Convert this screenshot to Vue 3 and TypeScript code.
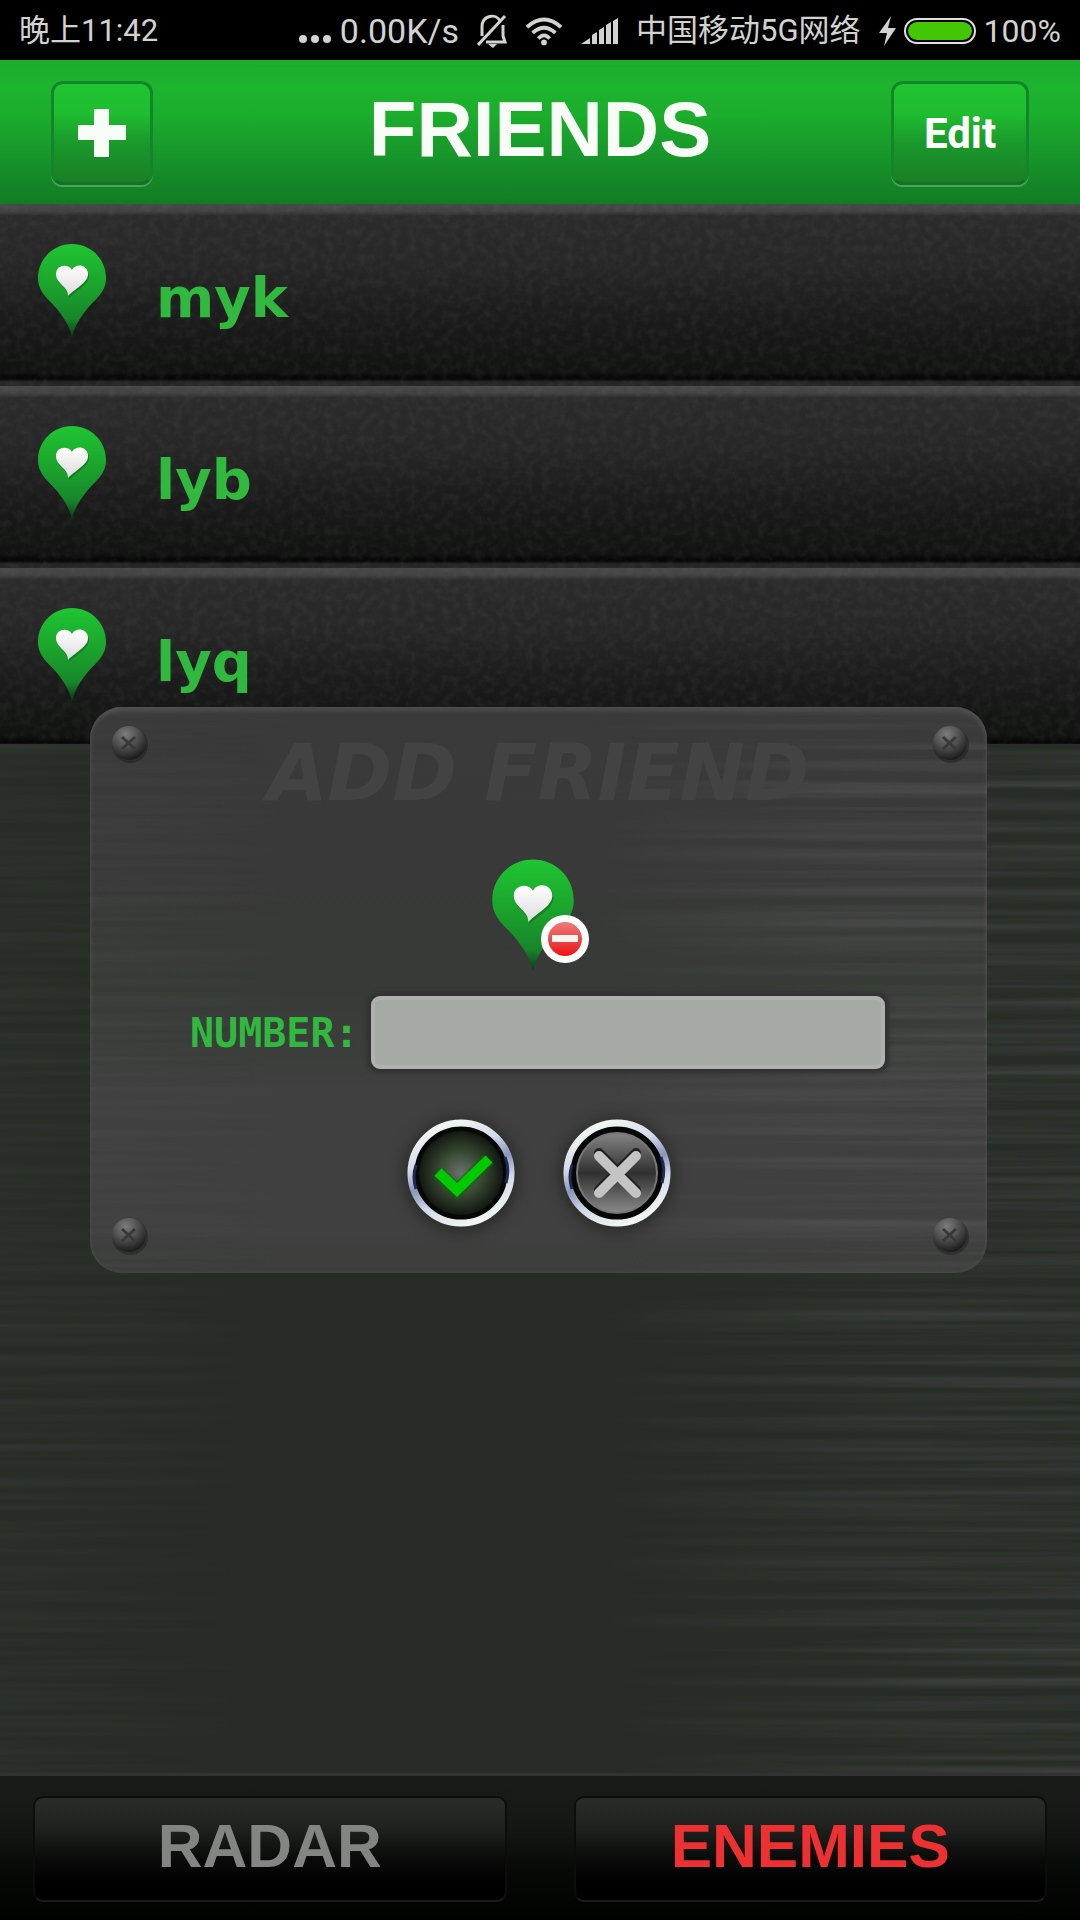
<script setup lang="ts">
import { ref } from 'vue'

interface Friend {
  id: number
  name: string
}

const friends = ref<Friend[]>([
  { id: 1, name: 'myk' },
  { id: 2, name: 'lyb' },
  { id: 3, name: 'lyq' },
])
const phone = ref('')
const screws = ['tl', 'tr', 'bl', 'br']
</script>

<template>
  <div class="screen">
    <svg class="defs" width="0" height="0" aria-hidden="true">
      <defs>
        <linearGradient id="pinFill" x1="0" y1="0" x2="0" y2="1">
          <stop offset="0" stop-color="#1fc532" />
          <stop offset="0.45" stop-color="#1ba32c" />
          <stop offset="0.8" stop-color="#17862a" />
          <stop offset="1" stop-color="#0d3a14" />
        </linearGradient>
        <linearGradient id="heartFill" x1="0" y1="0" x2="0" y2="1">
          <stop offset="0" stop-color="#ffffff" />
          <stop offset="1" stop-color="#dcdcdc" />
        </linearGradient>
        <linearGradient id="ring" x1="0.3" y1="0" x2="0.7" y2="1">
          <stop offset="0" stop-color="#f4f8f4" />
          <stop offset="0.3" stop-color="#d4dae8" />
          <stop offset="0.5" stop-color="#8a96bc" />
          <stop offset="0.7" stop-color="#d4dae8" />
          <stop offset="1" stop-color="#f4f8f4" />
        </linearGradient>
        <radialGradient id="screwFill" cx="0.4" cy="0.25" r="0.8">
          <stop offset="0" stop-color="#7c7c7c" />
          <stop offset="0.5" stop-color="#4c4c4c" />
          <stop offset="1" stop-color="#151515" />
        </radialGradient>
        <radialGradient id="okFill" cx="0.5" cy="0.5" r="0.5">
          <stop offset="0" stop-color="#6a726a" />
          <stop offset="0.55" stop-color="#35452f" />
          <stop offset="1" stop-color="#121812" />
        </radialGradient>
        <linearGradient id="noFill" x1="0" y1="0" x2="0" y2="1">
          <stop offset="0" stop-color="#858585" />
          <stop offset="0.5" stop-color="#303030" />
          <stop offset="1" stop-color="#8a8a8a" />
        </linearGradient>
        <linearGradient id="stopFill" x1="0" y1="0" x2="0" y2="1">
          <stop offset="0" stop-color="#f07a7a" />
          <stop offset="0.5" stop-color="#e84a4a" />
          <stop offset="1" stop-color="#ee1414" />
        </linearGradient>
        <filter id="brushed" x="0" y="0" width="100%" height="100%">
          <feTurbulence type="fractalNoise" baseFrequency="0.001 0.09" numOctaves="3" seed="4" />
          <feColorMatrix values="0 0 0 0 0.3  0 0 0 0 0.3  0 0 0 0 0.31  2.4 0 0 0 -0.9" />
        </filter>
        <filter id="grain" x="0" y="0" width="100%" height="100%">
          <feTurbulence type="fractalNoise" baseFrequency="0.12" numOctaves="3" seed="8" />
          <feColorMatrix values="0 0 0 0 0.4  0 0 0 0 0.42  0 0 0 0 0.4  1.6 0 0 0 -0.6" />
        </filter>
        <symbol id="pin" viewBox="0 0 70 96">
          <path
            d="M35 1C54 1 69 16 69 35C69 50 58 56 50 66C43 75 38 82 35 94C32 82 27 75 20 66C12 56 1 50 1 35C1 16 16 1 35 1Z"
            fill="url(#pinFill)"
          />
          <path
            d="M36 29C39 22 51 23 52 32C53 41 41 46 32 55C33 46 20 43 20 33C20 24 32 22 36 29Z"
            fill="#0b6a1a"
            opacity="0.6"
          />
          <path
            d="M35 27C38 20 50 21 51 30C52 39 40 44 31 53C32 44 19 41 19 31C19 22 31 20 35 27Z"
            fill="url(#heartFill)"
          />
        </symbol>
      </defs>
    </svg>

    <div class="status">
      <span>晚上11:42</span>
      <div class="status-right">
        <span class="pair">
          <svg width="34" height="32" viewBox="0 0 34 32" fill="currentColor">
            <circle cx="5" cy="24" r="4" /><circle cx="17" cy="24" r="4" /><circle cx="29" cy="24" r="4" />
          </svg>
          <span class="rate">0.00K/s</span>
        </span>
        <svg width="30" height="34" viewBox="0 0 30 34" fill="none" stroke="currentColor" stroke-width="3">
          <path d="M5 22V13C5 1 19 -1 23 7M26 11V22L28 28H9M1 31L28 2" />
          <path d="M11 30H20L16 34Z" fill="currentColor" stroke="none" />
        </svg>
        <svg width="38" height="30" viewBox="0 0 40 30" fill="none" stroke="currentColor" stroke-width="4">
          <path d="M2 11Q20 -5 38 11M8 17Q20 6 32 17M14 23Q20 16 26 23" />
          <circle cx="20" cy="27" r="3" fill="currentColor" stroke="none" />
        </svg>
        <svg width="37" height="28" viewBox="0 0 37 28" fill="currentColor">
          <path d="M0 27L9 21V27ZM11 18L16 15V27H11ZM18 13L23 10V27H18ZM25 8L30 5V27H25ZM32 4L37 1V27H32Z" />
        </svg>
        <span>中国移动5G网络</span>
        <span class="pair">
          <svg width="17" height="30" viewBox="0 0 17 30" fill="currentColor">
            <path d="M12 0L0 17H8L5 30L17 12H9Z" />
          </svg>
          <span class="battery"></span>
          <span class="percent">100%</span>
        </span>
      </div>
    </div>

    <header class="bar">
      <button class="bar-btn add" type="button" aria-label="Add friend">
        <svg width="48" height="48" viewBox="0 0 48 48" fill="#f8fcf6">
          <path d="M16 0H31V16H48V31H31V48H16V31H0V16H16Z" />
        </svg>
      </button>
      <h1>FRIENDS</h1>
      <button class="bar-btn edit" type="button">Edit</button>
    </header>

    <ul class="list">
      <li v-for="f in friends" :key="f.id" class="row">
        <svg class="fill grain" aria-hidden="true"><rect width="100%" height="100%" filter="url(#grain)" /></svg>
        <svg class="row-pin" width="70" height="96"><use href="#pin" /></svg>
        <span class="name">{{ f.name }}</span>
      </li>
    </ul>

    <main class="metal">
      <svg class="fill streaks" aria-hidden="true"><rect width="100%" height="100%" filter="url(#brushed)" /></svg>
    </main>

    <nav class="tabs">
      <button class="tab radar" type="button">RADAR</button>
      <button class="tab enemies" type="button">ENEMIES</button>
    </nav>

    <div class="overlay">
      <form class="dialog" @submit.prevent>
        <svg class="fill streaks" aria-hidden="true"><rect width="100%" height="100%" filter="url(#brushed)" /></svg>
        <svg v-for="s in screws" :key="s" class="screw" :class="s" width="40" height="40" viewBox="0 0 40 40">
          <circle cx="21" cy="22" r="18" fill="#1c1f1c" opacity="0.5" />
          <circle cx="20" cy="20" r="17" fill="url(#screwFill)" />
          <path d="M13 14L26 26M26 14L13 26" stroke="#383838" stroke-width="3" />
        </svg>
        <h2>ADD FRIEND</h2>
        <svg class="hero" width="112" height="124" viewBox="0 0 112 124">
          <use href="#pin" x="8" y="1" width="84" height="120" />
          <circle cx="82" cy="84" r="24" fill="#ffffff" />
          <circle cx="82" cy="84" r="17" fill="url(#stopFill)" />
          <rect x="69" y="80" width="26" height="7" fill="#fff4f0" />
        </svg>
        <div class="field">
          <label for="number">NUMBER:</label>
          <input id="number" v-model="phone" type="text" />
        </div>
        <div class="actions">
          <button class="round" type="submit" aria-label="Confirm">
            <svg width="108" height="108" viewBox="0 0 108 108">
              <circle cx="54" cy="54" r="50" fill="#050805" />
              <circle cx="54" cy="54" r="50" fill="none" stroke="url(#ring)" stroke-width="7" />
              <path d="M98 38Q103 50 99 64M9 70Q5 58 9 46" fill="none" stroke="#1e2a52" stroke-width="3" />
              <circle cx="54" cy="54" r="42" fill="url(#okFill)" />
              <path d="M31 54L50 72L82 40" fill="none" stroke="#0a6a08" stroke-width="14" opacity="0.5" />
              <path d="M31 53L50 71L82 40" fill="none" stroke="#00cb00" stroke-width="10" />
            </svg>
          </button>
          <button class="round" type="button" aria-label="Cancel">
            <svg width="108" height="108" viewBox="0 0 108 108">
              <circle cx="54" cy="54" r="50" fill="#050805" />
              <circle cx="54" cy="54" r="50" fill="none" stroke="url(#ring)" stroke-width="7" />
              <path d="M98 38Q103 50 99 64M9 70Q5 58 9 46" fill="none" stroke="#1e2a52" stroke-width="3" />
              <circle cx="54" cy="54" r="40" fill="url(#noFill)" stroke="#777777" stroke-width="2" />
              <path d="M36 34L73 71M73 34L36 71" stroke="#222222" stroke-width="10" stroke-linecap="round" />
              <path d="M36 37L73 74M73 37L36 74" stroke="#c4c4c4" stroke-width="10" stroke-linecap="round" />
            </svg>
          </button>
        </div>
      </form>
    </div>
  </div>
</template>

<style>
body {
  background: #282c27;
}
</style>

<style scoped>
* {
  box-sizing: border-box;
}
.screen {
  position: relative;
  display: flex;
  flex-direction: column;
  min-height: 100vh;
  background: #282c27;
  font-family: 'Liberation Sans', sans-serif;
}
.defs {
  position: absolute;
}
button {
  border: 0;
  padding: 0;
  margin: 0;
  background: none;
}
.fill {
  position: absolute;
  inset: 0;
  width: 100%;
  height: 100%;
}
.status {
  display: flex;
  justify-content: space-between;
  align-items: center;
  height: 60px;
  padding: 2px 19px 0;
  background: #000;
  color: #d2d2d0;
  font-family: Roboto, 'Noto Sans CJK SC', sans-serif;
  font-size: 31px;
  line-height: 40px;
  white-space: nowrap;
}
.status-right {
  display: flex;
  align-items: center;
  gap: 18px;
}
.pair {
  display: flex;
  align-items: center;
  gap: 8px;
}
.rate {
  font-size: 34px;
}
.percent {
  font-size: 32px;
}
.battery {
  width: 72px;
  height: 26px;
  border: 2px solid #e0e0e0;
  border-radius: 13px;
  padding: 2px;
  background: #43c705 content-box;
}
.bar {
  display: grid;
  grid-template-columns: 1fr auto 1fr;
  align-items: center;
  height: 144px;
  padding: 2px 51px 0;
  background: linear-gradient(#1cac2e, #1db42e 20%, #1bac2c 40%, #17922a 70%, #127c25);
}
.bar-btn {
  height: 104px;
  border: 3px solid #13852a;
  border-bottom-color: #107328;
  border-radius: 12px;
  background: linear-gradient(#1fc531, #1fbd30 30%, #1a992b 60%, #197f25);
  box-shadow: 0 2px 0 #4da55a;
  color: #fff;
}
.add {
  display: flex;
  align-items: center;
  justify-content: center;
  width: 102px;
}
.edit {
  justify-self: end;
  width: 138px;
  padding-top: 2px;
  font-family: Roboto, sans-serif;
  font-size: 42px;
  font-weight: 700;
  line-height: 50px;
}
h1 {
  margin: 0;
  padding-bottom: 8px;
  color: #f8fcf6;
  font-size: 78px;
  line-height: 80px;
}
.list {
  margin: 0;
  padding: 0;
  list-style: none;
  background: #1b1d1b;
}
.row {
  position: relative;
  display: flex;
  align-items: flex-start;
  height: 182px;
  padding-left: 37px;
  background: linear-gradient(#484848, #424242 7px, #2b2b2b 12px, #262726 60px, #1b1c1b 110px, #111311 168px, #060706 173px, #060706 175px, #232523 178px, #272927);
}
.row:last-child {
  height: 176px;
}
.grain {
  opacity: 0.09;
}
.row-pin {
  position: relative;
  margin-top: 39px;
}
.name {
  position: relative;
  margin: 64px 0 0 49px;
  color: #30b83f;
  font-family: 'DejaVu Sans', sans-serif;
  font-size: 56px;
  font-weight: 700;
  line-height: 60px;
}
.metal {
  position: relative;
  flex: 1;
  background: #282c27;
  border-bottom: 3px solid #313231;
}
.streaks {
  opacity: 0.17;
  mask-image: linear-gradient(90deg, rgba(0, 0, 0, 0.5), transparent 25%, transparent 55%, #000 85%);
}
.tabs {
  display: flex;
  gap: 67px;
  height: 144px;
  padding: 20px 33px 18px 33px;
  background: linear-gradient(#181c17, #151715 35%, #060a06 65%, #000200);
}
.tab {
  flex: 1;
  padding-bottom: 6px;
  border: 2px solid #0b0d0b;
  border-bottom-color: #1b1e1b;
  border-radius: 10px;
  background: linear-gradient(#2a2c2a, #1f211f 30%, #090b09 60%, #000 85%);
  font-family: inherit;
  font-size: 62px;
  font-weight: 700;
  line-height: 70px;
}
.radar {
  color: #828582;
}
.enemies {
  color: #ed3031;
}
.overlay {
  position: absolute;
  inset: 60px 0 0;
  display: flex;
  align-items: center;
  padding: 0 93px 0 90px;
}
.dialog {
  position: relative;
  display: flex;
  flex: 1;
  flex-direction: column;
  align-items: center;
  padding: 36px 0 46px;
  overflow: hidden;
  border-radius: 32px;
  background: linear-gradient(#3a3a3a, #383938 30%, #373b36 50%, #3f403f 68%, #404040 92%, #3b3e3a);
  box-shadow: inset 0 4px 4px #4b4d4b, inset 0 0 4px #4a4c4a;
}
.screw {
  position: absolute;
}
.tl {
  top: 16px;
  left: 19px;
}
.tr {
  top: 16px;
  right: 17px;
}
.bl {
  bottom: 18px;
  left: 19px;
}
.br {
  right: 17px;
  bottom: 18px;
}
h2 {
  position: relative;
  margin: 0;
  color: #434343;
  font-family: 'DejaVu Sans', sans-serif;
  font-size: 78px;
  font-style: italic;
  line-height: 60px;
  white-space: nowrap;
}
.hero {
  position: relative;
  margin: 52px 0 17px;
}
.field {
  position: relative;
  display: flex;
  align-items: center;
  gap: 12px;
  width: 100%;
  padding: 0 102px 0 100px;
}
label {
  color: #30b83f;
  font-family: 'DejaVu Sans Mono', monospace;
  font-size: 40px;
  font-weight: 700;
  line-height: 44px;
}
input {
  flex: 1;
  min-width: 0;
  height: 73px;
  padding: 0 16px;
  border: 4px solid #b0b0b0;
  border-radius: 9px;
  outline: 0;
  background: #a6aaa5;
  box-shadow: 0 0 4px 4px #303230;
  color: #222;
  font-family: inherit;
  font-size: 36px;
}
.actions {
  position: relative;
  display: flex;
  gap: 48px;
  margin-top: 50px;
}
.round {
  width: 108px;
  height: 108px;
  border-radius: 50%;
  box-shadow: 0 2px 14px 4px #2b2e2b;
}
.round svg {
  display: block;
}
</style>
